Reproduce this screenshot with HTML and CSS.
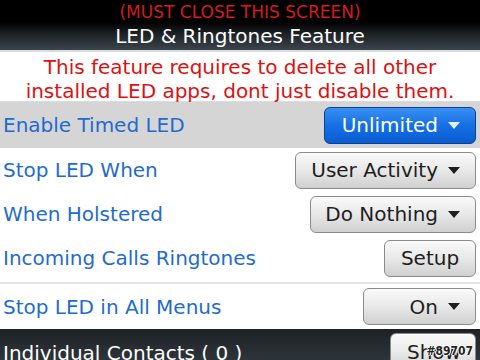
FILE: index.html
```html
<!DOCTYPE html>
<html>
<head>
    <title>LED &amp; Ringtones Feature</title>
    <link rel="stylesheet" href="styles.css">
</head>
<body>
    <div class="screen">
        <div class="titlebar">
            <div class="warn">(MUST CLOSE THIS SCREEN)</div>
            <div class="title">LED &amp; Ringtones Feature</div>
        </div>
        <div class="notice">This feature requires to delete all other<br>installed LED apps, dont just disable them.</div>

        <div class="row selected">
            <span class="label">Enable Timed LED</span>
            <button class="choice active w-unlimited">Unlimited <span class="arrow"></span></button>
        </div>
        <div class="row">
            <span class="label">Stop LED When</span>
            <button class="choice w-activity">User Activity <span class="arrow"></span></button>
        </div>
        <div class="row">
            <span class="label">When Holstered</span>
            <button class="choice w-nothing">Do Nothing <span class="arrow"></span></button>
        </div>
        <div class="row">
            <span class="label">Incoming Calls Ringtones</span>
            <button class="choice plain">Setup</button>
        </div>
        <div class="row divided">
            <span class="label">Stop LED in All Menus</span>
            <button class="choice w-on">On <span class="arrow"></span></button>
        </div>

        <div class="footer">
            <span class="footer-label">Individual Contacts ( 0 )</span>
            <button class="choice show">Show</button>
            <span class="stamp">#89707</span>
        </div>
    </div>
</body>
</html>
```

FILE: styles.css
```css
body {
    margin: 0;
    padding: 0;
    background-color: #fff;
    font-family: "DejaVu Sans", sans-serif;
}

.screen {
    width: 480px;
    height: 360px;
    overflow: hidden;
    position: relative;
}

.titlebar {
    height: 50px;
    background: linear-gradient(#000 0, #000 22px, #1d2226 34px, #3c454c 50px);
    border-bottom: 2px solid #d8dde0;
    text-align: center;
}

.warn {
    color: #d41c1c;
    font-size: 17px;
    line-height: 24px;
}

.title {
    color: #fff;
    font-size: 20px;
    line-height: 24px;
}

.notice {
    color: #e01010;
    font-size: 20px;
    line-height: 24px;
    text-align: center;
    padding: 3px 0 0;
    height: 46px;
    border-bottom: 1px solid #dcdcdc;
}

.row {
    height: 44px;
    display: flex;
    align-items: center;
    justify-content: space-between;
    padding: 0 4px 0 3px;
}

.row.selected {
    background-color: #d5d5d5;
    height: 46px;
}

.row.divided {
    border-top: 2px solid #e4e4e4;
    margin-top: 2px;
    height: 45px;
}

.label {
    color: #1f6bd0;
    font-size: 20px;
}

.choice {
    font-family: "DejaVu Sans", sans-serif;
    font-size: 20px;
    color: #1e1e1e;
    height: 37px;
    padding: 0 15px 0 12px;
    border: 1px solid #8a8a8a;
    border-radius: 6px;
    background: linear-gradient(#fafafa, #e8e8e8 50%, #d0d0d0);
    display: flex;
    align-items: center;
    justify-content: flex-end;
    gap: 10px;
    box-sizing: border-box;
}

.choice.active {
    color: #fff;
    border-color: #0b3f94;
    background: linear-gradient(#3a90f2, #1470e4 50%, #0a5cd0);
}

.w-unlimited { width: 152px; }
.w-activity { width: 181px; }
.w-nothing { width: 166px; }
.w-on { width: 113px; }

.choice.plain {
    width: 92px;
    justify-content: center;
    padding: 0;
}

.arrow {
    width: 0;
    height: 0;
    border-left: 6px solid transparent;
    border-right: 6px solid transparent;
    border-top: 7px solid currentColor;
}

.choice.active .arrow {
    border-top-color: #e8f0ff;
}

.footer {
    position: relative;
    height: 31px;
    overflow: hidden;
    background: linear-gradient(#1c2125, #2e353a);
    display: flex;
    align-items: flex-start;
    justify-content: space-between;
    padding: 0 4px 0 3px;
}

.footer-label {
    color: #fff;
    font-size: 20px;
    line-height: 24px;
    padding-top: 12px;
}

.choice.show {
    width: 86px;
    height: 40px;
    margin-top: 4px;
    justify-content: flex-start;
    align-items: flex-start;
    padding: 6px 0 0 16px;
}

.stamp {
    position: absolute;
    right: 7px;
    bottom: 2px;
    font-family: "DejaVu Sans Condensed", sans-serif;
    font-weight: bold;
    font-size: 12px;
    color: #222;
    text-shadow: 1px 0 #fff, -1px 0 #fff, 0 1px #fff, 0 -1px #fff;
}
```
